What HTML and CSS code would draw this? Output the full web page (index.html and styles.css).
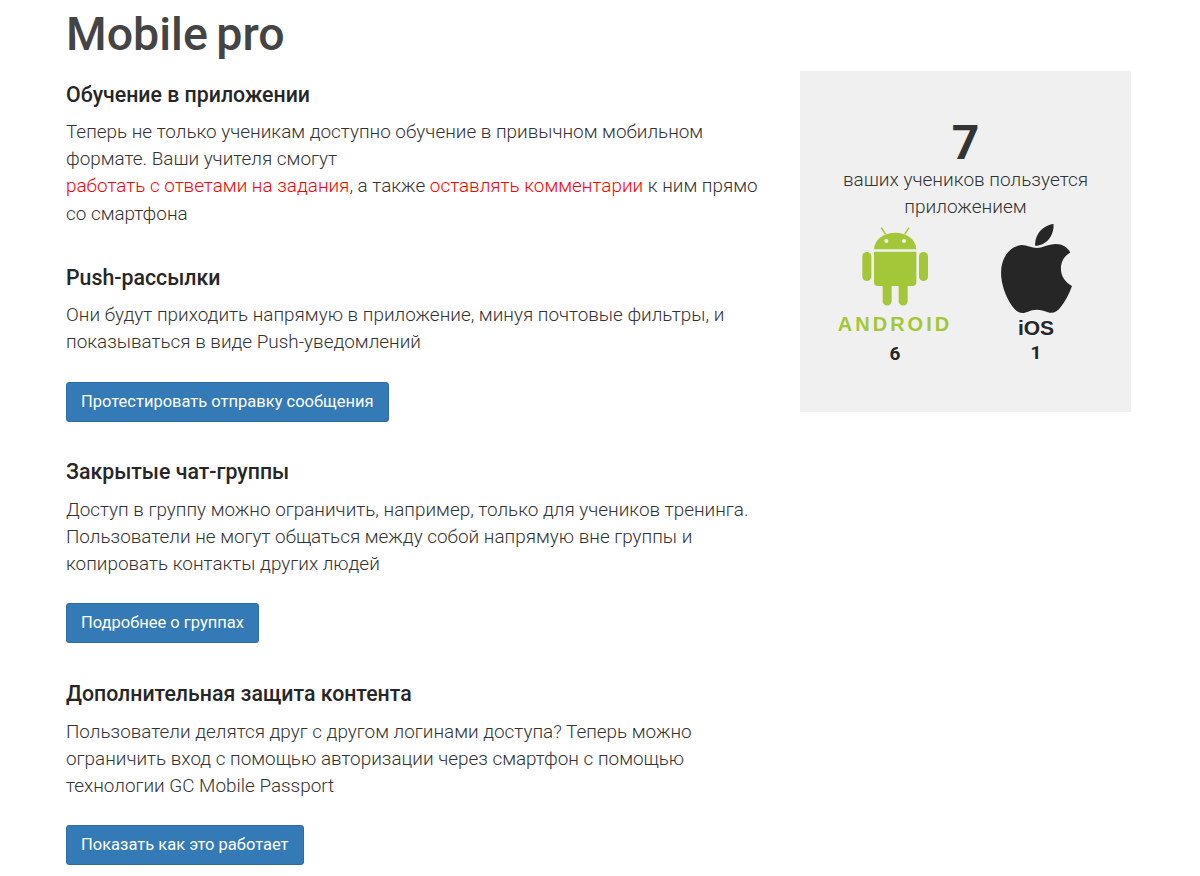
FILE: index.html
```html
<!DOCTYPE html>
<html lang="ru">
<head>
<meta charset="utf-8">
<title>Mobile pro</title>
<link rel="stylesheet" href="styles.css">
</head>
<body>
<div class="page">
  <main class="content">
    <h1 class="title">Mobile pro</h1>
    <section class="block">
      <h3 class="heading">Обучение в приложении</h3>
      <p class="text">Теперь не только ученикам доступно обучение в привычном мобильном формате. Ваши учителя смогут<br><span class="red">работать с ответами на задания</span>, а также <span class="red">оставлять комментарии</span> к ним прямо со смартфона</p>
    </section>
    <section class="block">
      <h3 class="heading">Push-рассылки</h3>
      <p class="text">Они будут приходить напрямую в приложение, минуя почтовые фильтры, и показываться в виде Push-уведомлений</p>
      <a class="btn">Протестировать отправку сообщения</a>
    </section>
    <section class="block">
      <h3 class="heading">Закрытые чат-группы</h3>
      <p class="text">Доступ в группу можно ограничить, например, только для учеников тренинга. Пользователи не могут общаться между собой напрямую вне группы и копировать контакты других людей</p>
      <a class="btn">Подробнее о группах</a>
    </section>
    <section class="block">
      <h3 class="heading">Дополнительная защита контента</h3>
      <p class="text">Пользователи делятся друг с другом логинами доступа? Теперь можно ограничить вход с помощью авторизации через смартфон с помощью технологии GC Mobile Passport</p>
      <a class="btn">Показать как это работает</a>
    </section>
  </main>
  <aside class="panel">
    <div class="count">7</div>
    <div class="caption">ваших учеников пользуется приложением</div>
    <div class="platforms">
      <div class="platform">
        <svg class="icon-android" viewBox="90 15 206 243" aria-hidden="true">
          <g fill="#a4c639">
            <path d="M130 85a63.500 50 0 0 1 127 0z"/>
            <path d="M130 92h127v92a11 11 0 0 1-11 11h-15v45a13.500 13.500 0 0 1-27 0v-45h-21v45a13.500 13.500 0 0 1-27 0v-45h-15a11 11 0 0 1-11-11z"/>
            <rect x="95" y="93" width="27" height="87" rx="13.500"/>
            <rect x="265" y="93" width="27" height="87" rx="13.500"/>
          </g>
          <path d="M165 40L152 20M222 40L235 20" stroke="#a4c639" stroke-width="4.500" fill="none"/>
          <circle cx="167" cy="60" r="6" fill="#f0f0f0"/>
          <circle cx="220" cy="60" r="6" fill="#f0f0f0"/>
        </svg>
        <div class="wordmark">ANDROID</div>
        <div class="num">6</div>
      </div>
      <div class="platform">
        <svg class="icon-apple" viewBox="30 22 218 272" aria-hidden="true">
          <path fill="#262626" d="M140 97C155 97 175 85 197 85C215 85 232 95 240 110C222 120 212 138 212 158C212 182 226 200 245 210C238 232 225 255 212 272C203 284 194 290 183 290C170 290 160 281 140 281C120 281 110 291 97 291C85 291 76 283 66 270C47 243 33 205 33 170C33 125 60 90 95 88C110 88 125 97 140 97Z"/>
          <path fill="#262626" d="M135 90C133 55 160 28 190 25C192 60 168 90 135 90Z"/>
        </svg>
        <div class="ios">iOS</div>
        <div class="num num-ios">1</div>
      </div>
    </div>
  </aside>
</div>
</body>
</html>
```
FILE: styles.css
```css
* { box-sizing: border-box; }
html, body { margin: 0; padding: 0; background: #fff; }
body { font-family: Roboto, "Liberation Sans", sans-serif; color: #333; height: 876px; overflow: hidden; }
.page { display: flex; align-items: flex-start; padding-left: 66px; }
.content { width: 700px; flex: none; }
.title { margin: 8px 0 0; font-size: 46.500px; line-height: 52px; font-weight: 500; color: #444; word-spacing: -3px; }
.block { margin-bottom: 36.800px; }
.block:first-of-type { margin-top: 20.500px; }
.heading { margin: 0; font-size: 21.300px; line-height: 28px; font-weight: 500; color: #262626; }
.text { margin: 9.500px 0 0; font-size: 18.900px; line-height: 27.200px; font-weight: 300; color: #333; }
.red { color: #f00; }
.btn { display: inline-block; margin-top: 26px; height: 40px; padding: 0 14px; font-size: 16.500px; line-height: 38px; color: #fff; background: #337ab7; border: 1px solid #2e6da4; border-radius: 3px; }
.panel { width: 331px; height: 341px; margin: 71px 0 0 34px; flex: none; background: #f0f0f0; padding-top: 48.500px; text-align: center; }
.count { font-size: 48px; line-height: 46.500px; font-weight: 700; color: #333; }
.caption { width: 280px; margin: 0 auto; font-size: 19px; line-height: 27px; font-weight: 300; color: #333; }
.platforms { display: flex; justify-content: center; margin-top: 2.500px; }
.platform { width: 141px; display: flex; flex-direction: column; align-items: center; }
.icon-android { width: 70px; height: 81px; display: block; margin-top: 3px; }
.icon-apple { width: 73px; height: 91px; display: block; }
.wordmark { font-family: "Liberation Sans", sans-serif; font-weight: 700; font-size: 20px; line-height: 24px; margin-top: 5px; letter-spacing: 3px; color: #a4c639; height: 24px; }
.ios { font-family: "Liberation Sans", sans-serif; font-size: 21px; line-height: 22px; font-weight: 700; color: #262626; height: 22px; margin-top: 3px; }
.num { font-size: 19px; line-height: 26px; font-weight: 700; color: #262626; margin-top: 5px; }
.num-ios { margin-top: 1px; }
```
